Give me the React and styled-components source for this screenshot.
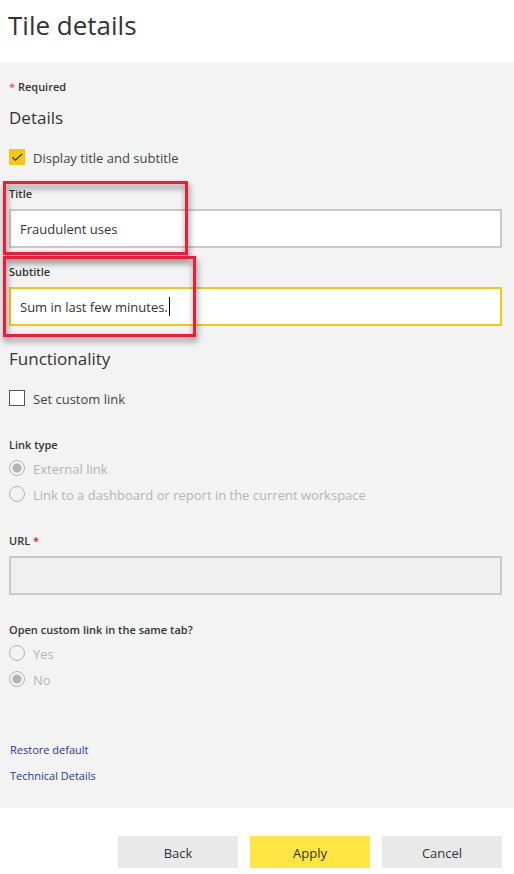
import React from "react";
import styled, { createGlobalStyle } from "styled-components";

const GlobalStyle = createGlobalStyle`
  *, *::before, *::after { box-sizing: border-box; }
  body {
    margin: 0;
    background: #fff;
    color: #333;
    font-family: "Segoe UI", "Open Sans", "Noto Sans", sans-serif;
    font-size: 13px;
    line-height: 20px;
  }
`;

const Header = styled.header`
  padding: 5px 8px 17px;
`;

const PageTitle = styled.h1`
  margin: 0;
  font-size: 26px;
  font-weight: 400;
  line-height: 40px;
`;

const Panel = styled.div`
  display: flex;
  flex-direction: column;
  padding: 15px 12px 22px 9px;
  background: #f3f3f3;
`;

const RequiredNote = styled.p`
  margin: 0 0 9px;
  font-size: 11px;
  font-weight: 600;
`;

const Star = styled.span`
  color: ${(p) => (p.$soft ? "#e0303f" : "#d8121f")};
  font-weight: ${(p) => (p.$soft ? 400 : 600)};
`;

const SectionTitle = styled.h2`
  margin: 0;
  font-size: 17px;
  font-weight: 400;
  line-height: 24px;
`;

const Section = styled.section`
  display: flex;
  flex-direction: column;
  margin-bottom: ${(p) => p.$after || 0}px;
`;

const Choice = styled.label`
  display: flex;
  align-items: center;
  gap: 8px;
  align-self: flex-start;
  color: ${(p) => (p.$disabled ? "#b3b3b3" : "#444")};
`;

const ChoiceText = styled.span`
  padding-top: 2px;
  line-height: 18px;
`;

const CheckRow = styled(Choice)`
  margin: 17px 0 ${(p) => p.$after}px;
`;

const Mark = styled.span`
  display: grid;
  flex: none;
  width: 16px;
  height: 16px;

  > * {
    grid-area: 1 / 1;
  }

  svg {
    pointer-events: none;
    visibility: hidden;
  }

  input:checked + svg {
    visibility: visible;
  }
`;

const CheckInput = styled.input`
  appearance: none;
  width: 16px;
  height: 16px;
  margin: 0;
  border: 1px solid #555;
  background: #fff;

  &:checked {
    border-color: #f2c811;
    background: #f2c811;
  }
`;

const RadioInput = styled.input`
  appearance: none;
  flex: none;
  width: 16px;
  height: 16px;
  margin: 0;
  border: 1px solid #b3b3b3;
  border-radius: 50%;

  &:checked {
    background: radial-gradient(circle, #b3b3b3 4px, transparent 5px);
  }
`;

const Field = styled.div`
  position: relative;
  display: flex;
  flex-direction: column;
  gap: 5px;
  margin-bottom: ${(p) => p.$after}px;
`;

const FieldLabel = styled.label`
  font-size: 11px;
  font-weight: 600;
`;

const TextInput = styled.input`
  width: 100%;
  height: 39px;
  padding: 1px 9px 0;
  border: 2px solid ${(p) => (p.$active ? "#f2c811" : "#c8c8c8")};
  border-radius: 0;
  outline: 0;
  background: #fff;
  color: #333;
  font: inherit;
  caret-color: ${(p) => (p.$active ? "transparent" : "auto")};

  &:disabled {
    background: #efefef;
  }
`;

const Caret = styled.span`
  position: absolute;
  left: 160px;
  bottom: 10px;
  width: 1px;
  height: 19px;
  background: #000;
`;

const Callout = styled.span`
  position: absolute;
  z-index: 1;
  top: ${(p) => p.$top}px;
  left: -6px;
  width: ${(p) => p.$width}px;
  height: ${(p) => p.$height}px;
  border: 3px solid #ee1c38;
  filter: drop-shadow(1px 4px 3px rgba(0, 0, 0, 0.55));
  pointer-events: none;
`;

const RadioGroup = styled.fieldset`
  display: flex;
  flex-direction: column;
  min-width: 0;
  margin: 0 0 ${(p) => p.$after}px;
  padding: 0;
  border: 0;

  legend {
    margin-bottom: 3px;
    padding: 0;
    font-size: 11px;
    font-weight: 600;
  }

  label + label {
    margin-top: 6px;
  }
`;

const Links = styled.nav`
  display: flex;
  flex-direction: column;
  align-items: flex-start;
  gap: 6px;
  padding-left: 1px;
`;

const PanelLink = styled.a`
  color: #1f3a93;
  font-size: 11px;
  text-decoration: none;
`;

const Footer = styled.footer`
  display: flex;
  justify-content: flex-end;
  gap: 12px;
  padding: 28px 12px 6px;
`;

const Button = styled.button`
  width: 120px;
  height: 32px;
  padding: 2px 0 0;
  border: 0;
  background: ${(p) => (p.$primary ? "#ffe642" : "#e9e9e9")};
  color: #333;
  font: inherit;
`;

function Checkbox({ label, defaultChecked, after }) {
  return (
    <CheckRow $after={after}>
      <Mark>
        <CheckInput type="checkbox" defaultChecked={defaultChecked} />
        <svg width="16" height="16" viewBox="0 0 16 16" fill="none" stroke="#333" strokeWidth="1.2" aria-hidden="true">
          <path d="M3.3 8.2 6.4 11.2 13 5" />
        </svg>
      </Mark>
      <ChoiceText>{label}</ChoiceText>
    </CheckRow>
  );
}

function Radios({ legend, name, options, selected, after }) {
  return (
    <RadioGroup disabled $after={after}>
      <legend>{legend}</legend>
      {options.map((option) => (
        <Choice key={option} $disabled>
          <RadioInput type="radio" name={name} value={option} defaultChecked={option === selected} />
          <ChoiceText>{option}</ChoiceText>
        </Choice>
      ))}
    </RadioGroup>
  );
}

export default function App() {
  return (
    <>
      <GlobalStyle />
      <Header>
        <PageTitle>Tile details</PageTitle>
      </Header>
      <main>
        <Panel>
          <RequiredNote>
            <Star $soft>*</Star> Required
          </RequiredNote>
          <Section $after={21}>
            <SectionTitle>Details</SectionTitle>
            <Checkbox label="Display title and subtitle" defaultChecked after={17} />
            <Field $after={14}>
              <FieldLabel htmlFor="title">Title</FieldLabel>
              <TextInput id="title" defaultValue="Fraudulent uses" />
              <Callout $top={-3} $width={185} $height={74} />
            </Field>
            <Field $after={0}>
              <FieldLabel htmlFor="subtitle">Subtitle</FieldLabel>
              <TextInput id="subtitle" $active defaultValue="Sum in last few minutes." />
              <Caret />
              <Callout $top={-6} $width={193} $height={81} />
            </Field>
          </Section>
          <Section>
            <SectionTitle>Functionality</SectionTitle>
            <Checkbox label="Set custom link" after={27} />
            <Radios
              legend="Link type"
              name="link-type"
              options={["External link", "Link to a dashboard or report in the current workspace"]}
              selected="External link"
              after={27}
            />
            <Field $after={25}>
              <FieldLabel htmlFor="url">
                URL <Star>*</Star>
              </FieldLabel>
              <TextInput id="url" disabled />
            </Field>
            <Radios
              legend="Open custom link in the same tab?"
              name="same-tab"
              options={["Yes", "No"]}
              selected="No"
              after={51}
            />
          </Section>
          <Links>
            <PanelLink href="#restore">Restore default</PanelLink>
            <PanelLink href="#technical">Technical Details</PanelLink>
          </Links>
        </Panel>
      </main>
      <Footer>
        <Button type="button">Back</Button>
        <Button type="button" $primary>
          Apply
        </Button>
        <Button type="button">Cancel</Button>
      </Footer>
    </>
  );
}
